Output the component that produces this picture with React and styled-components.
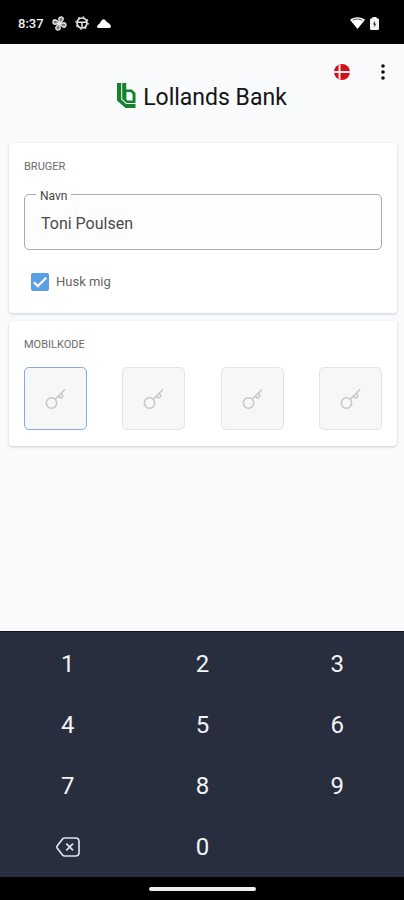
import React, { useCallback, useState } from 'react';
import styled, { createGlobalStyle } from 'styled-components';

const GlobalStyle = createGlobalStyle`

  * {
    box-sizing: border-box;
  }

  body {
    margin: 0;
    background: #f8fafc;
    font-family: Roboto, "Liberation Sans", sans-serif;
  }

`;

const Screen = styled.div`

  display: flex;
  flex-direction: column;
  min-height: 100vh;

`;

const StatusBar = styled.div`

  display: flex;
  justify-content: space-between;
  align-items: center;
  height: 44px;
  padding: 2px 25px 0 18px;
  background: #000;
  color: #f2f2f2;
  font-size: 13px;
  font-weight: 500;

`;

const StatusGroup = styled.div`

  display: flex;
  align-items: center;
  gap: ${(props) => props.$gap}px;

`;

const Header = styled.header`

  display: flex;
  flex-direction: column;
  height: 99px;

`;

const Actions = styled.div`

  display: flex;
  justify-content: flex-end;
  align-items: center;
  gap: 16px;
  height: 38px;
  padding: 18px 9px 0 0;

`;

const IconBtn = styled.button`

  display: flex;
  align-items: center;
  justify-content: center;
  width: 25px;
  height: 24px;
  padding: 0;
  border: none;
  background: none;

`;

const Brand = styled.div`

  display: flex;
  justify-content: center;
  align-items: center;
  gap: 7px;
  height: 30px;

`;

const BrandName = styled.h1`

  margin: 0;
  padding-top: 2px;
  color: #151515;
  font-size: 23px;
  font-weight: 400;
  line-height: 28px;

`;

const Main = styled.main`

  display: flex;
  flex-direction: column;
  gap: 8px;
  padding: 0 7px 24px 9px;

`;

const Card = styled.section`

  padding: 16px 15px;
  background: #fff;
  border-radius: 4px;
  box-shadow: 0 1px 3px rgba(0, 0, 0, 0.18);

`;

const CardTitle = styled.h2`

  margin: 0;
  color: #6a6a6a;
  font-size: 11px;
  font-weight: 400;
  line-height: 16px;

`;

const Field = styled.div`

  position: relative;
  margin-top: 19px;

`;

const FieldLabel = styled.label`

  position: absolute;
  top: -5px;
  left: 12px;
  padding: 0 4px;
  background: #fff;
  color: #444;
  font-size: 12px;
  line-height: 14px;

`;

const FieldInput = styled.input`

  display: block;
  width: 100%;
  height: 56px;
  padding: 2px 16px 0;
  border: 1px solid #aaa;
  border-radius: 5px;
  background: #fdfdfd;
  color: #4a4a4a;
  font-family: inherit;
  font-size: 16px;
  outline: none;

`;

const Remember = styled.label`

  display: flex;
  align-items: center;
  gap: 7px;
  margin-top: 23px;
  padding: 0 7px 6px;
  color: #666;
  font-size: 13px;
  line-height: 18px;

`;

const CheckBox = styled.span`

  display: grid;
  width: 18px;
  height: 18px;

    & > * {
    grid-area: 1 / 1;
    }

    & svg {
    pointer-events: none;
    }

`;

const CheckInput = styled.input`

  appearance: none;
  width: 18px;
  height: 18px;
  margin: 0;
  border: 2px solid #5a9fe4;
  border-radius: 2px;

    &:checked {
    background: #5a9fe4;
    }

`;

const CodeRow = styled.div`

  display: flex;
  justify-content: space-between;
  margin-top: 14px;

`;

const CodeCell = styled.div`

  display: grid;
  place-items: center;

    & > * {
    grid-area: 1 / 1;
    }

    & svg {
    pointer-events: none;
    }

`;

const CodeInput = styled.input`

  width: 63px;
  height: 63px;
  padding: 0;
  border: 1px solid ${(props) => (props.$active ? '#86a9ea' : '#e4e4e4')};
  border-radius: 5px;
  background: #f7f7f7;
  color: #4a4a4a;
  font-size: 24px;
  text-align: center;
  outline: none;

`;

const Keypad = styled.div`

  display: grid;
  grid-template-columns: repeat(3, 1fr);
  margin-top: auto;
  padding-bottom: 1px;
  border-top: 1px solid #10131c;
  background: #282e3e;

`;

const Key = styled.button`

  display: flex;
  align-items: center;
  justify-content: center;
  height: 61px;
  padding: 2px 0 0 1px;
  border: none;
  background: none;
  color: #f4f4f6;
  font-family: inherit;
  font-size: 24px;

`;

const NavBar = styled.div`

  display: flex;
  justify-content: center;
  align-items: center;
  height: 23px;
  background: #000;

`;

const NavHandle = styled.div`

  width: 107px;
  height: 4px;
  border-radius: 2px;
  background: #eee;

`;

const FanIcon = () => (
  <svg width="15" height="15" viewBox="0 0 15 15" fill="#777" stroke="#e8e8e8" strokeWidth="1.4" strokeLinejoin="round">
    {[0, 90, 180, 270].map((v) => (
      <path key={v} transform={`rotate(${v - 8} 7.5 7.5)`} d="M7.500 7.500V2.200C8.600.7 12 .9 11.900 3.400C11.800 5 10 5.600 7.500 7.500Z" />
    ))}
  </svg>
);

const WheelIcon = () => (
  <svg width="14" height="14" viewBox="0 0 14 14" fill="none" stroke="#e8e8e8">
    <circle cx="7" cy="7" r="5" strokeWidth="1.700" />
    <circle cx="7" cy="7" r="6.200" strokeWidth="1.200" strokeDasharray="1.700 3.170" />
    <path d="M3 6.200H11M7 6.500V11.500" strokeWidth="1.500" />
  </svg>
);

const CloudIcon = () => (
  <svg width="14" height="9" viewBox="0 0 14 9" fill="#fff">
    <path d="M1.500 9C.2 9-.3 7.800.3 6.800C.8 5.900 1.700 5.400 2.700 4.600C3.700 3.200 4.600.3 6.500.3C8.200.3 8.700 1.800 9.700 2.800C10.500 3.600 12 4.300 13 5.400C14.500 7 14.200 9 12.500 9Z" />
  </svg>
);

const WifiIcon = () => (
  <svg width="15" height="12" viewBox="0 0 15 12">
    <path d="M0 2.800C4 -.7 11 -.7 15 2.800L7.500 12Z" fill="#fff" />
    <path d="M2.700 3.300C5.500 1.600 9.500 1.600 12.300 3.300" fill="none" stroke="#555" strokeWidth="1" />
  </svg>
);

const BatteryIcon = () => (
  <svg width="9" height="13" viewBox="0 0 9 13">
    <path d="M2.500 0H6.500V1.300H7.500Q9 1.300 9 2.800V11.500Q9 13 7.500 13H1.500Q0 13 0 11.500V2.800Q0 1.300 1.500 1.300H2.500Z" fill="#f4f4f4" />
    <path d="M5 3.800L3 7.600H4.300V10.400L6.200 6.700H5Z" fill="#333" />
  </svg>
);

const FlagIcon = () => (
  <svg width="16" height="16" viewBox="0 0 16 16">
    <clipPath id="flag"><circle cx="8" cy="8" r="8" /></clipPath>
    <g clipPath="url(#flag)">
      <rect width="16" height="16" fill="#d0101c" />
      <path d="M5.500 0V16M0 8H16" stroke="#fbeeee" strokeWidth="2" />
    </g>
  </svg>
);

const MoreIcon = () => (
  <svg width="4" height="16" viewBox="0 0 4 16" fill="#111">
    <circle cx="2" cy="2" r="1.800" />
    <circle cx="2" cy="8" r="1.800" />
    <circle cx="2" cy="14" r="1.800" />
  </svg>
);

const BankLogo = () => (
  <svg width="19" height="29" viewBox="0 0 19 29" fill="#14822b" fillRule="evenodd">
    <path d="M0 0H4.200V16.500L9.200 21H18.500V25H8.500L0 17.500Z" />
    <path d="M5.200 0H9.200V6.500H14.800L18.500 10V20H9.600L5.200 16ZM9.400 9H13.600L15.600 11V17.600H10.600L9.400 16.500Z" />
  </svg>
);

const CheckIcon = () => (
  <svg width="18" height="18" viewBox="0 0 18 18" fill="none" stroke="#fff" strokeWidth="2.200">
    <path d="M2.800 9.200L6.800 13.100L15.200 4.800" />
  </svg>
);

const KeyIcon = () => (
  <svg width="21" height="21" viewBox="0 0 21 21" fill="none" stroke="#c6c6c6" strokeWidth="1.500">
    <circle cx="6.500" cy="15" r="5.200" />
    <path d="M10.200 11.300L20 1.500" />
    <path d="M13.600 8L14.300 9.200C15.200 10.300 16.900 9.900 17.500 8.700C18 7.600 17.400 6.400 16.300 6" />
  </svg>
);

const BackspaceIcon = () => (
  <svg width="24" height="20" viewBox="0 0 24 20" fill="none" stroke="#dfe1ec" strokeWidth="1.700" strokeLinejoin="round">
    <path d="M8.500 1H19.500Q23 1 23 4.500V15.500Q23 19 19.500 19H8.500Q7.300 19 6.500 18L1.300 11.200Q.5 10 1.300 8.800L6.500 2Q7.300 1 8.500 1Z" />
    <path d="M10.300 6.600L17 13.400M17 6.600L10.300 13.400" />
  </svg>
);

const cells = [0, 1, 2, 3];
const digits = ['1', '2', '3', '4', '5', '6', '7', '8', '9'];

const App = () => {

  const [name, setName] = useState('Toni Poulsen');
  const [remember, setRemember] = useState(true);
  const [code, setCode] = useState('');

  const onChangeName = useCallback((e) => {
    setName(e.target.value);
  }, []);

  const onChangeRemember = useCallback((e) => {
    setRemember(e.target.checked);
  }, []);

  const onPress = useCallback((digit) => () => {
    setCode((prev) => (prev + digit).slice(0, 4));
  }, []);

  const onErase = useCallback(() => {
    setCode((prev) => prev.slice(0, -1));
  }, []);

  return (
    <Screen>
      <GlobalStyle />
      <StatusBar>
        <StatusGroup $gap={8}>
          <span>8:37</span>
          <FanIcon />
          <WheelIcon />
          <CloudIcon />
        </StatusGroup>
        <StatusGroup $gap={5}>
          <WifiIcon />
          <BatteryIcon />
        </StatusGroup>
      </StatusBar>

      <Header>
        <Actions>
          <IconBtn type="button" aria-label="Sprog"><FlagIcon /></IconBtn>
          <IconBtn type="button" aria-label="Menu"><MoreIcon /></IconBtn>
        </Actions>
        <Brand>
          <BankLogo />
          <BrandName>Lollands Bank</BrandName>
        </Brand>
      </Header>

      <Main>
        <Card>
          <CardTitle>BRUGER</CardTitle>
          <Field>
            <FieldInput id="name" value={name} onChange={onChangeName} />
            <FieldLabel htmlFor="name">Navn</FieldLabel>
          </Field>
          <Remember>
            <CheckBox>
              <CheckInput type="checkbox" checked={remember} onChange={onChangeRemember} />
              {remember && <CheckIcon />}
            </CheckBox>
            Husk mig
          </Remember>
        </Card>

        <Card>
          <CardTitle>MOBILKODE</CardTitle>
          <CodeRow>
            {cells.map((v) => (
              <CodeCell key={v}>
                <CodeInput
                  type="password"
                  aria-label={`Ciffer ${v + 1}`}
                  readOnly
                  value={code[v] || ''}
                  $active={v === code.length}
                />
                {!code[v] && <KeyIcon />}
              </CodeCell>
            ))}
          </CodeRow>
        </Card>
      </Main>

      <Keypad>
        {digits.map((v) => (
          <Key key={v} type="button" onClick={onPress(v)}>{v}</Key>
        ))}
        <Key type="button" aria-label="Slet" onClick={onErase}><BackspaceIcon /></Key>
        <Key type="button" onClick={onPress('0')}>0</Key>
      </Keypad>
      <NavBar><NavHandle /></NavBar>
    </Screen>
  );
};

export default App;
